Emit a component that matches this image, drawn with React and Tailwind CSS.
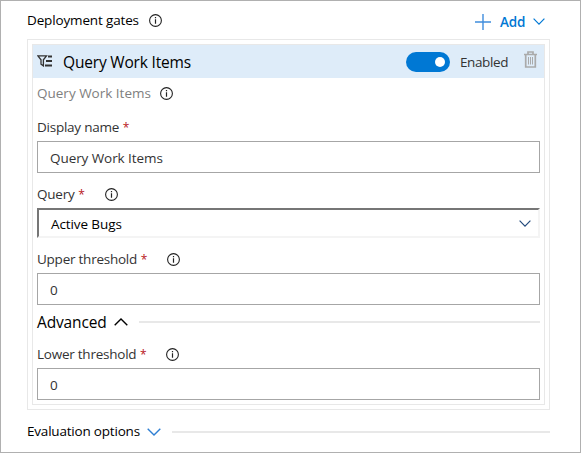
import React from "react";

function Info({ className = "" }) {
  return (
    <svg className={`shrink-0 ${className}`} width="13" height="13" viewBox="0 0 13 13" fill="none">
      <circle cx="6.5" cy="6.5" r="5.9" stroke="#222" strokeWidth="1.1" />
      <path d="M6.5 5.3v4.4M6.5 3v1.2" stroke="#222" strokeWidth="1.2" />
    </svg>
  );
}

function Chevron({ className = "", width = 14, height = 8, up = false }) {
  return (
    <svg className={`shrink-0 ${className}`} width={width} height={height} viewBox="0 0 14 8" fill="none" stroke="currentColor" strokeWidth="1.4">
      <path d={up ? "M.7 7.3 7 1l6.3 6.3" : "M.7.7 7 7 13.3.7"} />
    </svg>
  );
}

function Label({ children, className, width, info }) {
  return (
    <div className={`flex items-center text-[13.5px] tracking-[-0.24px] text-[#333] ${className}`}>
      <span className={`shrink-0 ${width}`}>
        {children} <span className="ml-[0.5px] text-[12px] text-[#b8151b]">*</span>
      </span>
      {info && <Info className="mt-px" />}
    </div>
  );
}

function Field({ value }) {
  return (
    <input
      readOnly
      value={value}
      className="block h-8 w-full border border-[#a6a6a6] bg-white px-3 pt-[2px] text-[13.5px] tracking-[-0.07px] text-[#333] outline-none"
    />
  );
}

export default function App() {
  return (
    <main className="h-[453px] w-[581px] overflow-hidden whitespace-nowrap border border-[#b0b0b0] bg-white pl-[26px] pr-[30px] font-['Open_Sans','Noto_Sans',sans-serif] text-[13.5px] text-black">
      <header className="flex h-[38px] items-center">
        <span className="w-[122px] pt-px tracking-[-0.15px]">Deployment gates</span>
        <Info className="mt-px" />
        <button className="ml-auto mr-[5px] flex items-center pt-[3px] text-[#0078d4]">
          <svg width="16" height="16" viewBox="0 0 16 16" fill="none" stroke="#3f8ddd" strokeWidth="1.4">
            <path d="M8 0v16M0 8h16" />
          </svg>
          <span className="ml-[9px] w-[33px] pt-px text-left font-semibold tracking-[-0.2px]">Add</span>
          <Chevron className="-mt-px" width={12} height={7} />
        </button>
      </header>

      <section className="h-[371px] border border-[#e8e8e8] p-1">
        <div className="h-[361px] border border-[#e8e8e8]">
          <div className="flex h-[33px] items-center bg-[#deecf9] pl-1 pr-[7px]">
            <svg className="-mt-px" width="15" height="12" viewBox="0 0 15 12" fill="none" stroke="#333" strokeWidth="1.3">
              <path d="M.9.9h8.6L6.4 4.8v6.1L4 9.2V4.8z" />
              <path d="M11 1.5h4M9 6h6M8 10.5h7" strokeWidth="2" />
            </svg>
            <span className="ml-[11px] pt-[2px] text-[15.5px] tracking-[-0.18px]">Query Work Items</span>
            <span className="ml-auto flex h-5 w-11 items-center justify-end rounded-full bg-[#0078d4] pr-[5px]">
              <span className="size-[10px] rounded-full bg-white" />
            </span>
            <span className="ml-[10px] w-[64px] pt-[2px] tracking-[-0.4px] text-[#333]">Enabled</span>
            <svg className="-mt-1" width="13" height="17" viewBox="0 0 13 17" fill="none" stroke="#aaa">
              <path d="M0 3.5h13M4 3V1h5v2M1.7 4v12h9.6V4" strokeWidth="1.7" />
              <path d="M4.5 6v7.5M6.5 6v7.5M8.5 6v7.5" strokeWidth="1" />
            </svg>
          </div>

          <div className="px-1">
            <div className="flex h-[31px] items-center text-[#808080]">
              <span className="w-[123px]">Query Work Items</span>
              <Info />
            </div>
            <Label className="h-8 pt-[5px]">Display name</Label>
            <Field value="Query Work Items" />
            <Label className="h-[35px] pt-[7px]" width="w-[68px]" info>Query</Label>
            <div className="flex h-[30px] items-center border-2 border-b-[#f4f4f4] border-l-[#767676] border-r-[#f4f4f4] border-t-[#767676] pl-3 pr-[7px]">
              <span className="pt-[2px] tracking-[-0.1px]">Active Bugs</span>
              <Chevron className="ml-auto text-[#234a7c]" width={12} height={7} />
            </div>
            <Label className="h-[35px] pt-[7px]" width="w-[130px]" info>Upper threshold</Label>
            <Field value="0" />
            <div className="flex h-[35px] items-center">
              <span className="w-[77px] text-[15.5px] tracking-[-0.15px]">Advanced</span>
              <Chevron className="-mt-px" up />
              <span className="-mt-px ml-[11px] h-[2px] flex-1 bg-[#e8e8e8]" />
            </div>
            <Label className="h-7" width="w-[129px]" info>Lower threshold</Label>
            <Field value="0" />
          </div>
        </div>
      </section>

      <footer className="flex h-[43px] items-center">
        <span className="w-[120px] tracking-[-0.2px]">Evaluation options</span>
        <Chevron className="text-[#2f7fd3]" />
        <span className="ml-[11px] mt-px h-[2px] flex-1 bg-[#e8e8e8]" />
      </footer>
    </main>
  );
}
